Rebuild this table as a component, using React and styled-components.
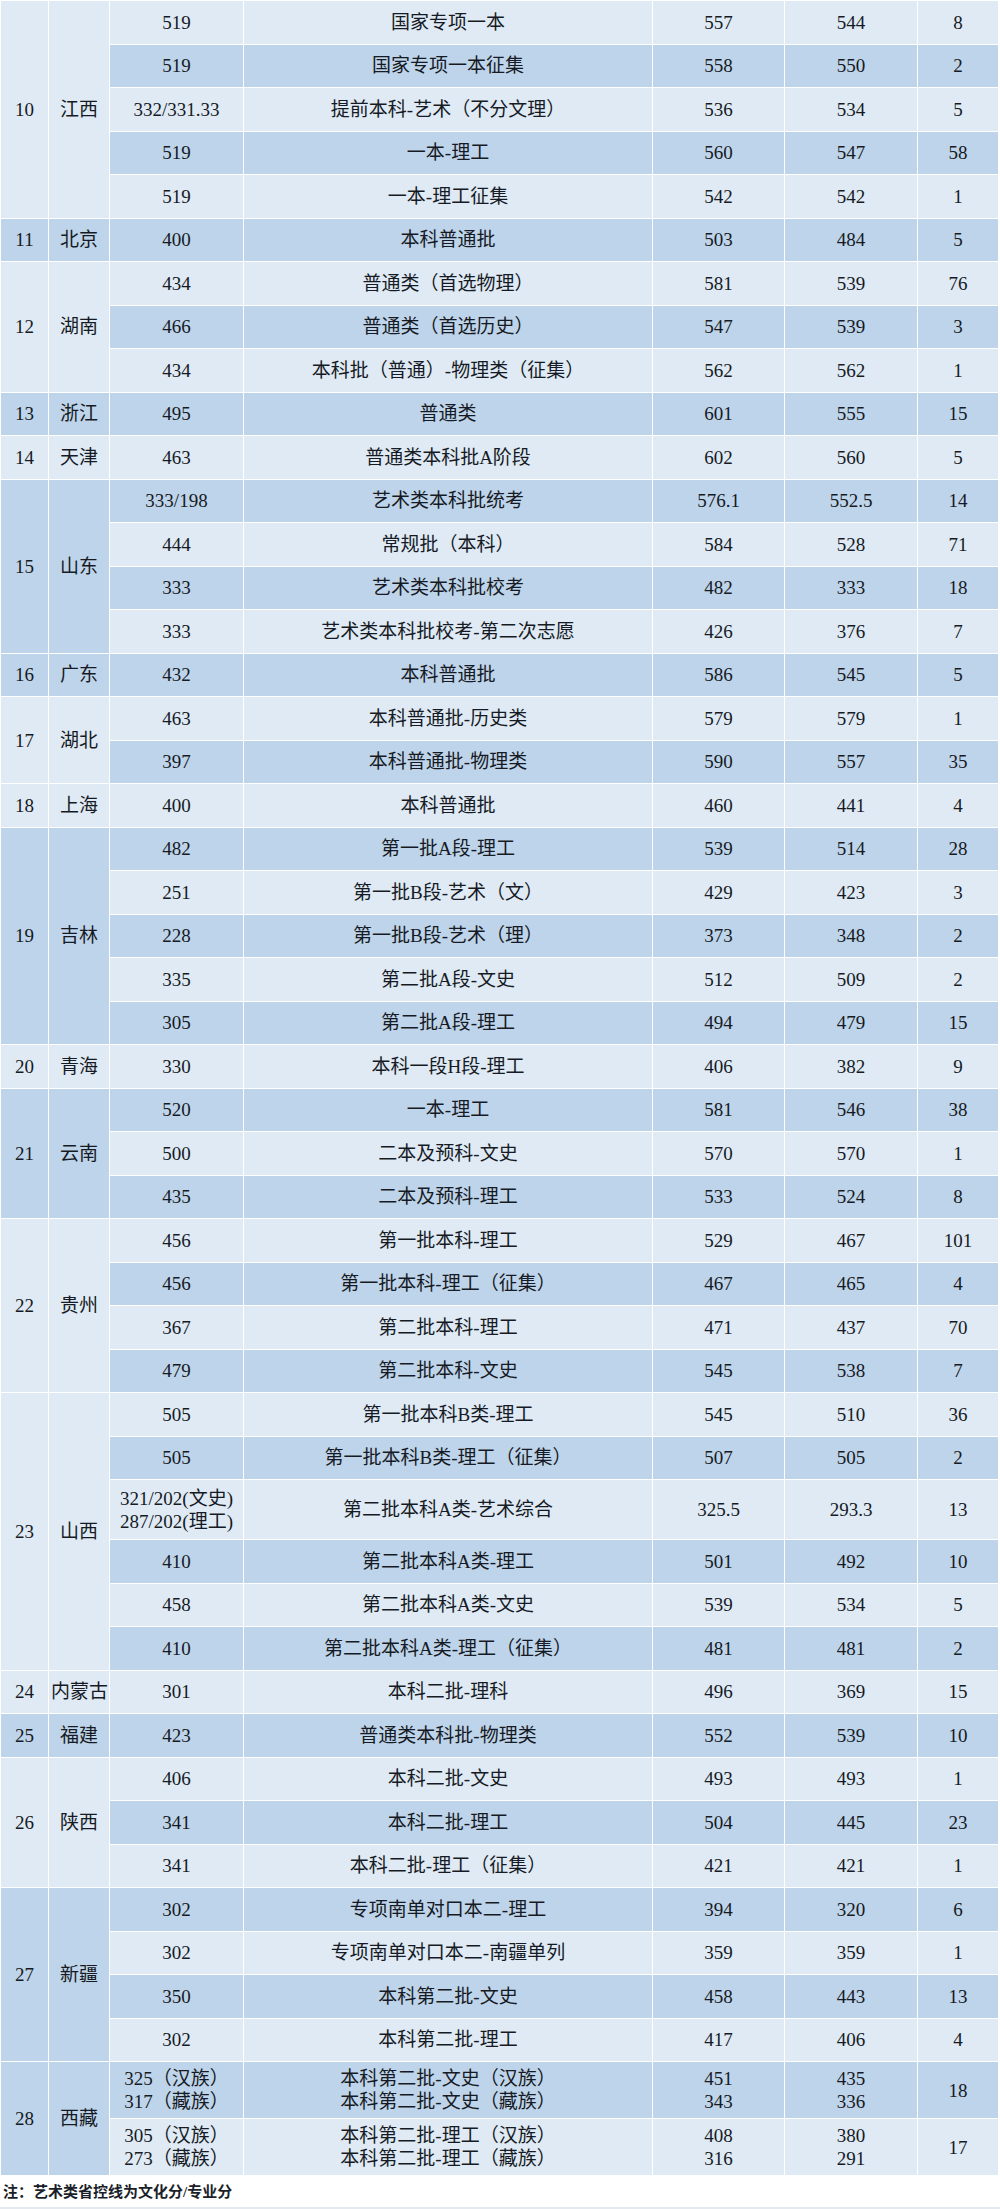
import React from "react"
import styled, { createGlobalStyle } from "styled-components"

const GlobalStyle = createGlobalStyle`
  html, body {
    margin: 0;
    padding: 0;
    background: #ffffff;
  }
  body {
    font-family: "Liberation Serif", "Noto Sans CJK SC", serif;
    color: #161a24;
  }
`

const LIGHT = "#dfeaf5"
const DARK = "#bed4ea"

const Page = styled.div`
  width: 1000px;
  height: 2209px;
  display: flex;
  flex-direction: column;
  background: #fff;
`

const Table = styled.table`
  width: 998px;
  table-layout: fixed;
  border-collapse: collapse;
  font-family: "Liberation Serif", "Noto Sans CJK SC", serif;
  font-size: 19px;
  line-height: 23px;
  color: #161a24;
`

const Col = styled.col`
  width: ${(p) => p.$w}px;
`

const Row = styled.tr`
  height: ${(p) => p.$h}px;
`

const Cell = styled.td`
  background: ${(p) => (p.$dark ? DARK : LIGHT)};
  border: 1px solid rgba(255, 255, 255, 0.5);
  text-align: center;
  vertical-align: middle;
  padding: 0 2px;
  white-space: nowrap;
  overflow: hidden;
`

const Lines = styled.div`
  display: inline-block;
  text-align: left;
`

const Note = styled.div`
  flex: 1;
  display: flex;
  align-items: center;
  padding: 0 3px 2px;
  font-family: "Liberation Serif", "Noto Sans CJK SC", serif;
  font-size: 15px;
  font-weight: 700;
  color: #1b1f2a;
  border-bottom: 2px solid #e4e9f0;
  box-sizing: border-box;
`

const columns = [48, 61, 134, 409, 132, 133, 81]

const groups = [
  { no: 10, prov: "江西", rows: [
    ["519", "国家专项一本", "557", "544", "8"],
    ["519", "国家专项一本征集", "558", "550", "2"],
    ["332/331.33", "提前本科-艺术（不分文理）", "536", "534", "5"],
    ["519", "一本-理工", "560", "547", "58"],
    ["519", "一本-理工征集", "542", "542", "1"],
  ] },
  { no: 11, prov: "北京", rows: [["400", "本科普通批", "503", "484", "5"]] },
  { no: 12, prov: "湖南", rows: [
    ["434", "普通类（首选物理）", "581", "539", "76"],
    ["466", "普通类（首选历史）", "547", "539", "3"],
    ["434", "本科批（普通）-物理类（征集）", "562", "562", "1"],
  ] },
  { no: 13, prov: "浙江", rows: [["495", "普通类", "601", "555", "15"]] },
  { no: 14, prov: "天津", rows: [["463", "普通类本科批A阶段", "602", "560", "5"]] },
  { no: 15, prov: "山东", rows: [
    ["333/198", "艺术类本科批统考", "576.1", "552.5", "14"],
    ["444", "常规批（本科）", "584", "528", "71"],
    ["333", "艺术类本科批校考", "482", "333", "18"],
    ["333", "艺术类本科批校考-第二次志愿", "426", "376", "7"],
  ] },
  { no: 16, prov: "广东", rows: [["432", "本科普通批", "586", "545", "5"]] },
  { no: 17, prov: "湖北", rows: [
    ["463", "本科普通批-历史类", "579", "579", "1"],
    ["397", "本科普通批-物理类", "590", "557", "35"],
  ] },
  { no: 18, prov: "上海", rows: [["400", "本科普通批", "460", "441", "4"]] },
  { no: 19, prov: "吉林", rows: [
    ["482", "第一批A段-理工", "539", "514", "28"],
    ["251", "第一批B段-艺术（文）", "429", "423", "3"],
    ["228", "第一批B段-艺术（理）", "373", "348", "2"],
    ["335", "第二批A段-文史", "512", "509", "2"],
    ["305", "第二批A段-理工", "494", "479", "15"],
  ] },
  { no: 20, prov: "青海", rows: [["330", "本科一段H段-理工", "406", "382", "9"]] },
  { no: 21, prov: "云南", rows: [
    ["520", "一本-理工", "581", "546", "38"],
    ["500", "二本及预科-文史", "570", "570", "1"],
    ["435", "二本及预科-理工", "533", "524", "8"],
  ] },
  { no: 22, prov: "贵州", rows: [
    ["456", "第一批本科-理工", "529", "467", "101"],
    ["456", "第一批本科-理工（征集）", "467", "465", "4"],
    ["367", "第二批本科-理工", "471", "437", "70"],
    ["479", "第二批本科-文史", "545", "538", "7"],
  ] },
  { no: 23, prov: "山西", rows: [
    ["505", "第一批本科B类-理工", "545", "510", "36"],
    ["505", "第一批本科B类-理工（征集）", "507", "505", "2"],
    [["321/202(文史)", "287/202(理工)"], "第二批本科A类-艺术综合", "325.5", "293.3", "13"],
    ["410", "第二批本科A类-理工", "501", "492", "10"],
    ["458", "第二批本科A类-文史", "539", "534", "5"],
    ["410", "第二批本科A类-理工（征集）", "481", "481", "2"],
  ] },
  { no: 24, prov: "内蒙古", rows: [["301", "本科二批-理科", "496", "369", "15"]] },
  { no: 25, prov: "福建", rows: [["423", "普通类本科批-物理类", "552", "539", "10"]] },
  { no: 26, prov: "陕西", rows: [
    ["406", "本科二批-文史", "493", "493", "1"],
    ["341", "本科二批-理工", "504", "445", "23"],
    ["341", "本科二批-理工（征集）", "421", "421", "1"],
  ] },
  { no: 27, prov: "新疆", rows: [
    ["302", "专项南单对口本二-理工", "394", "320", "6"],
    ["302", "专项南单对口本二-南疆单列", "359", "359", "1"],
    ["350", "本科第二批-文史", "458", "443", "13"],
    ["302", "本科第二批-理工", "417", "406", "4"],
  ] },
  { no: 28, prov: "西藏", rows: [
    [["325（汉族）", "317（藏族）"], ["本科第二批-文史（汉族）", "本科第二批-文史（藏族）"], ["451", "343"], ["435", "336"], "18"],
    [["305（汉族）", "273（藏族）"], ["本科第二批-理工（汉族）", "本科第二批-理工（藏族）"], ["408", "316"], ["380", "291"], "17"],
  ] },
]

function Value({ v }) {
  if (Array.isArray(v)) {
    return (
      <Lines>
        {v.map((line) => (
          <div key={line}>{line}</div>
        ))}
      </Lines>
    )
  }
  return v
}

function rowHeight(row) {
  const multi = row.filter((v) => Array.isArray(v)).length
  if (!multi) return 43.5
  return multi > 1 ? 57.2 : 60
}

export default function App() {
  let index = 0
  const trs = []
  groups.forEach((g) => {
    g.rows.forEach((row, i) => {
      const dark = index % 2 === 1
      trs.push(
        <Row key={index} $h={rowHeight(row)}>
          {i === 0 && (
            <>
              <Cell rowSpan={g.rows.length} $dark={dark}>{g.no}</Cell>
              <Cell rowSpan={g.rows.length} $dark={dark}>{g.prov}</Cell>
            </>
          )}
          {row.map((v, j) => (
            <Cell key={j} $dark={dark}>
              <Value v={v} />
            </Cell>
          ))}
        </Row>
      )
      index++
    })
  })

  return (
    <Page>
      <GlobalStyle />
      <Table>
        <colgroup>
          {columns.map((w, i) => (
            <Col key={i} $w={w} />
          ))}
        </colgroup>
        <tbody>{trs}</tbody>
      </Table>
      <Note>注：艺术类省控线为文化分/专业分</Note>
    </Page>
  )
}
